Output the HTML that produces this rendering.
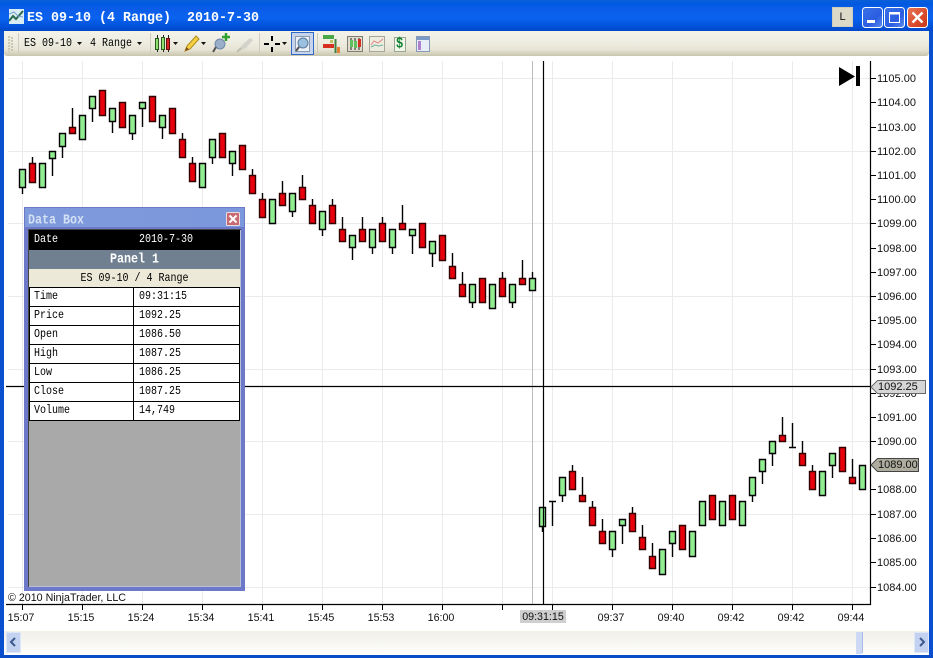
<!DOCTYPE html>
<html><head><meta charset="utf-8"><title>ES 09-10</title>
<style>
html,body{margin:0;padding:0;width:933px;height:658px;overflow:hidden;background:#fff}
#w{position:relative;width:933px;height:658px;overflow:hidden;background:#fff}
.a{position:absolute;white-space:pre}
.m{font-family:"Liberation Mono",monospace;font-size:10px;line-height:12px;color:#000;transform:scaleY(1.2)}
.b{font-size:11.67px;font-weight:bold}
.s{font-family:"Liberation Sans",Arial,sans-serif;font-size:10.7px;line-height:13px;color:#111}
.p{left:877px;font-size:11px}
.t{width:60px;text-align:center}
.c{position:absolute;left:29px;width:211px;box-sizing:border-box}
</style></head><body><div id="w">
<div class="a" style="left:0;top:0;width:933px;height:31px;background:linear-gradient(#0a5fd8 0,#0058e0 4px,#0a5ce8 8px,#0a62ee 18px,#0050d8 27px,#0048c8 31px)"></div>
<div class="a" style="left:0;top:31px;width:4px;height:627px;background:#0a4fd0"></div>
<div class="a" style="left:929px;top:31px;width:4px;height:627px;background:#0a4fd0"></div>
<div class="a" style="left:0;top:655px;width:933px;height:3px;background:#0a4cc8"></div>
<svg class="a" style="left:9px;top:9px" width="15" height="15" viewBox="0 0 15 15"><rect width="15" height="15" fill="#d8ecf4"/><path d="M0 12L4 7L7 10L14 2" stroke="#2a6a4a" stroke-width="2" fill="none"/><path d="M0 5L5 3L9 7L14 8" stroke="#7aa0d0" fill="none"/></svg>
<div class="a m" style="left:27px;top:11px;font-size:13.33px;line-height:15px;font-weight:bold;color:#fff;transform:scaleY(1.05)">ES 09-10 (4 Range)  2010-7-30</div>
<div class="a" style="left:832px;top:7px;width:21px;height:20px;background:#dcd9c8;box-shadow:inset 0 0 0 1px #cfccba;font:11px/20px 'Liberation Sans',sans-serif;text-align:center;color:#111">L</div>
<svg class="a" style="left:860px;top:6px" width="70" height="22" viewBox="0 0 70 22">
<defs><linearGradient id="b" x1="0" y1="0" x2="1" y2="1"><stop offset="0" stop-color="#3a72e8"/><stop offset=".6" stop-color="#2a5de0"/><stop offset="1" stop-color="#5e8ef0"/></linearGradient><linearGradient id="r" x1="0" y1="0" x2="1" y2="1"><stop offset="0" stop-color="#e8785a"/><stop offset=".6" stop-color="#d84a2a"/><stop offset="1" stop-color="#c83818"/></linearGradient></defs>
<rect x="2.5" y="1.5" width="20" height="20" rx="3" fill="url(#b)" stroke="#fff"/>
<rect x="7" y="14" width="8" height="3" fill="#fff"/>
<rect x="24.5" y="1.5" width="20" height="20" rx="3" fill="url(#b)" stroke="#fff"/>
<rect x="29.5" y="6.5" width="10" height="10" fill="none" stroke="#fff"/><rect x="29" y="6" width="11" height="2.5" fill="#fff"/>
<rect x="47.5" y="1.5" width="20" height="20" rx="3" fill="url(#r)" stroke="#fff"/>
<path d="M52.5 6.5L62.5 16.5M62.5 6.5L52.5 16.5" stroke="#fff" stroke-width="2.4"/>
</svg>
<div class="a" style="left:4px;top:31px;width:925px;height:25px;background:linear-gradient(#f4f3ea 0,#efeee3 40%,#e6e4d4 75%,#c8c5ae 100%);border-radius:0 0 3px 3px"></div>
<svg class="a" style="left:4px;top:31px" width="925" height="25" viewBox="4 31 925 25">
<path d="M9 36v16M12 37v14" stroke="#c9c6b2" stroke-width="2" stroke-dasharray="2 1"/>
<path d="M18.5 33v20M150.500 33v20M259.500 33v20M317.500 33v20" stroke="#cfccbc"/>
<path d="M77 42h5l-2.500 3zM137 42h5l-2.500 3zM173 42h5l-2.500 3zM201 42h5l-2.500 3zM282 42h5l-2.500 3z" fill="#111"/>
<path d="M157.500 35v17M163.500 35v17M168.500 35v17" stroke="#222"/>
<rect x="155.500" y="38.500" width="3" height="11" fill="#90e070" stroke="#2a5a20"/><rect x="161.500" y="37.500" width="3" height="12" fill="#90e070" stroke="#2a5a20"/><rect x="166.500" y="38.500" width="3" height="11" fill="#e02020" stroke="#601010"/>
<path d="M185 51l2-5 9-10 3 3-9 10z" fill="#f4d040" stroke="#b08a20"/><path d="M185 51l1.500-4 2.500 2.500z" fill="#805020"/>
<circle cx="220" cy="44" r="5" fill="#9ab0c8" stroke="#7088a8"/><path d="M216 47l-3 5" stroke="#555" stroke-width="2"/><path d="M226 33v8M222 37h8" stroke="#30a030" stroke-width="2.500"/>
<path d="M238 52l4-7 8-7 3 2-7 8z" fill="#d4d3cb"/><path d="M237 52l4-4" stroke="#c0bfb4" stroke-width="2"/>
<path d="M272 36v5M272 47v5M264 44h5M275 44h5" stroke="#000" stroke-width="2"/>
<rect x="291.500" y="32.500" width="22" height="22" fill="#c6d5ec" stroke="#3169c6"/>
<rect x="295.500" y="36.500" width="14" height="15" fill="#eef2f8" stroke="#8a9ab0"/><circle cx="303" cy="43" r="5" fill="#9cc0e0" stroke="#5a7a9a"/><path d="M299 47l-3 4" stroke="#555" stroke-width="2"/>
<rect x="323" y="35" width="11" height="4" fill="#48a848"/><rect x="323" y="44" width="11" height="4" fill="#d83020"/><path d="M335.500 39v14" stroke="#408040" stroke-width="2"/><rect x="337" y="47" width="3" height="6" fill="#e08030"/><rect x="330" y="40" width="3" height="3" fill="#c0c060"/>
<rect x="347.500" y="36.500" width="15" height="15" fill="#e0ddd0" stroke="#807c70"/><path d="M351 38v12M355 38v12M359 38v12" stroke="#222"/><rect x="350" y="40" width="3" height="7" fill="#60c060"/><rect x="354" y="41" width="3" height="7" fill="#60c060"/><rect x="358" y="39" width="3" height="8" fill="#d83020"/>
<rect x="369.500" y="36.500" width="15" height="15" fill="#ececdf" stroke="#a8a698"/><path d="M371 45l3-4 4 2 5-4" stroke="#e08888" fill="none"/><path d="M371 47l4-2 4 1 4-1" stroke="#70b0a0" fill="none"/>
<rect x="394.500" y="37.500" width="11" height="14" fill="#f0f6ea" stroke="#98a890"/>
<rect x="416.500" y="36.500" width="13" height="15" fill="#e8eef8" stroke="#8898b8"/><rect x="417" y="37" width="12" height="3" fill="#7a9ac8"/><rect x="418" y="41" width="3" height="9" fill="#b080d0"/>
</svg>
<div class="a m" style="left:396px;top:38px;font-weight:bold;font-size:12px;color:#108030">$</div>
<div class="a m" style="left:24px;top:39px">ES 09-10</div>
<div class="a m" style="left:90px;top:39px">4 Range</div>
<svg class="a" style="left:0;top:0" width="933" height="658" viewBox="0 0 933 658">
<path d="M22.500 61V604M82.500 61V604M142.500 61V604M202.500 61V604M262.500 61V604M322.500 61V604M382.500 61V604M442.500 61V604M502.500 61V604M552.500 61V604M612.500 61V604M672.500 61V604M732.500 61V604M792.500 61V604M852.500 61V604M8 78.500H870M8 151.500H870M8 223.500H870M8 296.500H870M8 369.500H870M8 441.500H870M8 514.500H870M8 587.500H870" stroke="#ebebeb"/>
<path d="M532.500 61V604" stroke="#bdbdbd"/>
<path stroke-width="1.4" d="M22.500 187V194M32.500 157V163M52.500 158V176M62.500 146V158M72.500 108V127M92.500 108V122M112.500 121V133M132.500 133V140M142.500 108V127M162.500 127V139M182.500 133V139M192.500 157V163M212.500 157V164M232.500 163V176M252.500 169V175M262.500 193V199M282.500 181V193M292.500 211V217M302.500 175V187M312.500 199V205M322.500 229V236M332.500 199V205M342.500 217V229M352.500 247V260M362.500 217V229M372.500 247V254M382.500 217V223M392.500 247V254M402.500 205V223M412.500 235V254M432.500 253V267M452.500 253V266M462.500 272V284M472.500 302V308M502.500 272V278M512.500 302V308M522.500 260V278M532.500 272V278M542.500 526V532M552.500 501V526M549 501.500H556M562.500 495V502M572.500 465V471M582.500 477V495M592.500 501V507M602.500 519V531M612.500 549V557M622.500 525V544M632.500 507V513M642.500 525V537M652.500 543V556M672.500 543V557M752.500 495V502M762.500 471V484M772.500 453V466M782.500 417V435M792.500 423V447M789 447.500H796M802.500 441V453M812.500 465V471M832.500 465V478M852.500 459V477" stroke="#000" fill="none"/>
<path fill="#90ee90" stroke="#000" stroke-width="1.4" d="M19.500 169.500h6v18h-6zM39.500 163.500h6v24h-6zM49.500 151.500h6v7h-6zM59.500 133.500h6v13h-6zM79.500 115.500h6v24h-6zM89.500 96.500h6v12h-6zM109.500 108.500h6v13h-6zM129.500 115.500h6v18h-6zM139.500 102.500h6v6h-6zM159.500 115.500h6v12h-6zM199.500 163.500h6v24h-6zM209.500 139.500h6v18h-6zM229.500 151.500h6v12h-6zM269.500 199.500h6v24h-6zM289.500 193.500h6v18h-6zM319.500 211.500h6v18h-6zM349.500 235.500h6v12h-6zM369.500 229.500h6v18h-6zM389.500 229.500h6v18h-6zM409.500 229.500h6v6h-6zM429.500 241.500h6v12h-6zM469.500 284.500h6v18h-6zM489.500 284.500h6v24h-6zM509.500 284.500h6v18h-6zM529.500 278.500h6v12h-6zM539.500 507.500h6v19h-6zM559.500 477.500h6v18h-6zM609.500 531.500h6v18h-6zM619.500 519.500h6v6h-6zM659.500 549.500h6v25h-6zM669.500 531.500h6v12h-6zM689.500 531.500h6v25h-6zM699.500 501.500h6v24h-6zM719.500 501.500h6v24h-6zM739.500 501.500h6v24h-6zM749.500 477.500h6v18h-6zM759.500 459.500h6v12h-6zM769.500 441.500h6v12h-6zM819.500 471.500h6v24h-6zM829.500 453.500h6v12h-6zM859.500 465.500h6v24h-6z"/>
<path fill="#e8000c" stroke="#300" stroke-width="1.4" d="M29.500 163.500h6v19h-6zM69.500 127.500h6v6h-6zM99.500 90.500h6v25h-6zM119.500 102.500h6v25h-6zM149.500 96.500h6v25h-6zM169.500 108.500h6v25h-6zM179.500 139.500h6v18h-6zM189.500 163.500h6v18h-6zM219.500 133.500h6v24h-6zM239.500 145.500h6v24h-6zM249.500 175.500h6v18h-6zM259.500 199.500h6v18h-6zM279.500 193.500h6v12h-6zM299.500 187.500h6v12h-6zM309.500 205.500h6v18h-6zM329.500 205.500h6v18h-6zM339.500 229.500h6v12h-6zM359.500 229.500h6v12h-6zM379.500 223.500h6v18h-6zM399.500 223.500h6v6h-6zM419.500 223.500h6v24h-6zM439.500 235.500h6v25h-6zM449.500 266.500h6v12h-6zM459.500 284.500h6v12h-6zM479.500 278.500h6v24h-6zM499.500 278.500h6v18h-6zM519.500 278.500h6v6h-6zM569.500 471.500h6v18h-6zM579.500 495.500h6v6h-6zM589.500 507.500h6v18h-6zM599.500 531.500h6v12h-6zM629.500 513.500h6v18h-6zM639.500 537.500h6v12h-6zM649.500 556.500h6v12h-6zM679.500 525.500h6v24h-6zM709.500 495.500h6v24h-6zM729.500 495.500h6v24h-6zM779.500 435.500h6v6h-6zM799.500 453.500h6v12h-6zM809.500 471.500h6v18h-6zM839.500 447.500h6v24h-6zM849.500 477.500h6v6h-6z"/>
<path d="M6 386.500H870M543.500 61V604" stroke="#000" stroke-width="1.2"/>
<path d="M870.500 61V604.500H6" stroke="#000" stroke-width="1.2" fill="none"/>
<path d="M871 78.500h5M871 102.500h5M871 127.500h5M871 151.500h5M871 175.500h5M871 199.500h5M871 223.500h5M871 248.500h5M871 272.500h5M871 296.500h5M871 320.500h5M871 344.500h5M871 369.500h5M871 393.500h5M871 417.500h5M871 441.500h5M871 465.500h5M871 489.500h5M871 514.500h5M871 538.500h5M871 562.500h5M871 587.500h5" stroke="#000"/>
<path d="M22.500 605v5M82.500 605v5M142.500 605v5M202.500 605v5M262.500 605v5M322.500 605v5M382.500 605v5M442.500 605v5M502.500 605v5M552.500 605v5M612.500 605v5M672.500 605v5M732.500 605v5M792.500 605v5M852.500 605v5" stroke="#000"/>
<path d="M839 67L855 76.500L839 86z" fill="#000"/><rect x="856" y="66" width="4" height="20" fill="#000"/>
</svg>
<div class="a s p" style="top:73px">1105.00</div>
<div class="a s p" style="top:97px">1104.00</div>
<div class="a s p" style="top:122px">1103.00</div>
<div class="a s p" style="top:146px">1102.00</div>
<div class="a s p" style="top:170px">1101.00</div>
<div class="a s p" style="top:194px">1100.00</div>
<div class="a s p" style="top:218px">1099.00</div>
<div class="a s p" style="top:243px">1098.00</div>
<div class="a s p" style="top:267px">1097.00</div>
<div class="a s p" style="top:291px">1096.00</div>
<div class="a s p" style="top:315px">1095.00</div>
<div class="a s p" style="top:339px">1094.00</div>
<div class="a s p" style="top:364px">1093.00</div>
<div class="a s p" style="top:388px">1092.00</div>
<div class="a s p" style="top:412px">1091.00</div>
<div class="a s p" style="top:436px">1090.00</div>
<div class="a s p" style="top:484px">1088.00</div>
<div class="a s p" style="top:509px">1087.00</div>
<div class="a s p" style="top:533px">1086.00</div>
<div class="a s p" style="top:557px">1085.00</div>
<div class="a s p" style="top:582px">1084.00</div>
<svg class="a" style="left:870px;top:378px" width="60" height="96" viewBox="870 378 60 96">
<path d="M871 387L877.500 380.500H925.500V393.500H877.500z" fill="#d6d6d6" stroke="#6a6a6a"/>
<path d="M871 465L877.500 458.500H918.500V471.500H877.500z" fill="#adac9e" stroke="#444"/>
</svg>
<div class="a s" style="left:878px;top:381px;font-size:11px">1092.25</div>
<div class="a s" style="left:878px;top:459px;font-size:11px">1089.00</div>
<div class="a s" style="left:8px;top:592px">© 2010 NinjaTrader, LLC</div>
<div class="a s t" style="left:-9px;top:612px">15:07</div>
<div class="a s t" style="left:51px;top:612px">15:15</div>
<div class="a s t" style="left:111px;top:612px">15:24</div>
<div class="a s t" style="left:171px;top:612px">15:34</div>
<div class="a s t" style="left:231px;top:612px">15:41</div>
<div class="a s t" style="left:291px;top:612px">15:45</div>
<div class="a s t" style="left:351px;top:612px">15:53</div>
<div class="a s t" style="left:411px;top:612px">16:00</div>
<div class="a s" style="left:520px;top:610px;width:46px;height:13px;line-height:14px;text-align:center;background:#cfcfcf">09:31:15</div>
<div class="a s t" style="left:581px;top:612px">09:37</div>
<div class="a s t" style="left:641px;top:612px">09:40</div>
<div class="a s t" style="left:701px;top:612px">09:42</div>
<div class="a s t" style="left:761px;top:612px">09:42</div>
<div class="a s t" style="left:821px;top:612px">09:44</div>
<div class="a" style="left:4px;top:631px;width:925px;height:24px;background:linear-gradient(#f0efe8,#fefefc)"></div>
<svg class="a" style="left:4px;top:631px" width="925" height="24" viewBox="4 631 925 24">
<rect x="6.500" y="632.500" width="14" height="20" fill="#c4d2f2" stroke="#dfe6f8"/><path d="M15 638l-4 4 4 4" stroke="#3c5a8c" stroke-width="2" fill="none"/>
<rect x="914.500" y="632.500" width="14" height="20" fill="#c4d2f2" stroke="#dfe6f8"/><path d="M920 638l4 4-4 4" stroke="#3c5a8c" stroke-width="2" fill="none"/>
<rect x="856" y="632" width="6" height="22" fill="#ccd8f4"/><path d="M862.500 632v21" stroke="#a8bce8"/>
</svg>
<div class="a" style="left:24px;top:207px;width:221px;height:384px;background:#6e78c8"></div>
<div class="a" style="left:25px;top:208px;width:219px;height:19px;background:linear-gradient(90deg,#7f9bdc,#7c98dc)"></div>
<div class="a m b" style="left:28px;top:214px;color:#d4e0f4">Data Box</div>
<svg class="a" style="left:226px;top:212px" width="14" height="14" viewBox="0 0 14 14"><rect x=".5" y=".5" width="13" height="13" rx="1" fill="#c86a70" stroke="#e8dce0"/><path d="M3.500 3.500l7 7M10.500 3.500l-7 7" stroke="#fff" stroke-width="2"/></svg>
<div class="a" style="left:28px;top:229px;width:213px;height:358px;background:#a9a9a9;box-shadow:inset 1px 1px 0 #444,inset -1px -1px 0 #b8c0d8"></div>
<div class="c" style="top:230px;height:20px;background:#000"></div>
<div class="a m" style="left:34px;top:235px;color:#fff">Date</div>
<div class="a m" style="left:139px;top:235px;color:#fff">2010-7-30</div>
<div class="c" style="top:250px;height:19px;background:#708090"></div>
<div class="a m b" style="left:29px;top:253px;width:211px;text-align:center;color:#fff">Panel 1</div>
<div class="c" style="top:269px;height:19px;background:#ece9d8"></div>
<div class="a m" style="left:29px;top:274px;width:211px;text-align:center">ES 09-10 / 4 Range</div>
<div class="c" style="top:287px;height:134px;background:#fff;border:1px solid #000"></div>
<svg class="a" style="left:29px;top:287px" width="211" height="134" viewBox="29 287 211 134"><path d="M29 306.500H240M29 325.500H240M29 344.500H240M29 363.500H240M29 382.500H240M29 401.500H240M133.500 287V421" stroke="#000"/></svg>
<div class="a m" style="left:34px;top:292px">Time</div><div class="a m" style="left:139px;top:292px">09:31:15</div>
<div class="a m" style="left:34px;top:311px">Price</div><div class="a m" style="left:139px;top:311px">1092.25</div>
<div class="a m" style="left:34px;top:330px">Open</div><div class="a m" style="left:139px;top:330px">1086.50</div>
<div class="a m" style="left:34px;top:349px">High</div><div class="a m" style="left:139px;top:349px">1087.25</div>
<div class="a m" style="left:34px;top:368px">Low</div><div class="a m" style="left:139px;top:368px">1086.25</div>
<div class="a m" style="left:34px;top:387px">Close</div><div class="a m" style="left:139px;top:387px">1087.25</div>
<div class="a m" style="left:34px;top:406px">Volume</div><div class="a m" style="left:139px;top:406px">14,749</div>
</div></body></html>
